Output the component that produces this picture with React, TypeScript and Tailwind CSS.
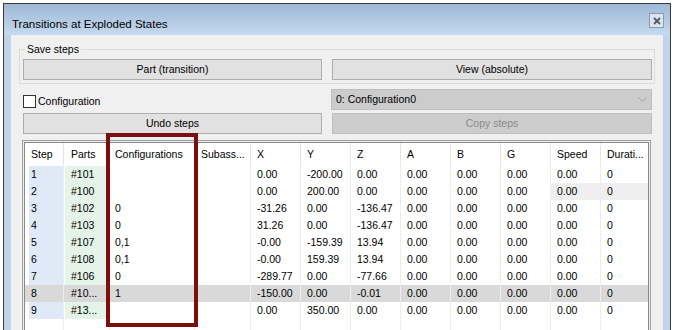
import React from 'react';

type Col = { label: string; w: number; pl: number; border: boolean };

const cols: Col[] = [
  { label: 'Step', w: 38, pl: 6, border: false },
  { label: 'Parts', w: 46, pl: 7, border: true },
  { label: 'Configurations', w: 85, pl: 5, border: true },
  { label: 'Subass...', w: 56, pl: 6, border: true },
  { label: 'X', w: 50, pl: 6, border: true },
  { label: 'Y', w: 50, pl: 6, border: true },
  { label: 'Z', w: 50, pl: 6, border: true },
  { label: 'A', w: 50, pl: 6, border: true },
  { label: 'B', w: 50, pl: 6, border: true },
  { label: 'G', w: 50, pl: 6, border: true },
  { label: 'Speed', w: 50, pl: 6, border: true },
  { label: 'Durati...', w: 48, pl: 6, border: true },
];

const rows: string[][] = [
  ['1', '#101', '', '', '0.00', '-200.00', '0.00'],
  ['2', '#100', '', '', '0.00', '200.00', '0.00'],
  ['3', '#102', '0', '', '-31.26', '0.00', '-136.47'],
  ['4', '#103', '0', '', '31.26', '0.00', '-136.47'],
  ['5', '#107', '0,1', '', '-0.00', '-159.39', '13.94'],
  ['6', '#108', '0,1', '', '-0.00', '159.39', '13.94'],
  ['7', '#106', '0', '', '-289.77', '0.00', '-77.66'],
  ['8', '#10...', '1', '', '-150.00', '0.00', '-0.01'],
  ['9', '#13...', '', '', '0.00', '350.00', '0.00'],
].map((r) => [...r, '0.00', '0.00', '0.00', '0.00', '0']);

function Button({ label, w, disabled }: { label: string; w: number; disabled?: boolean }) {
  return (
    <div
      style={{ width: w }}
      className={
        disabled
          ? 'flex h-[21px] items-center justify-center border border-[#bfbfbf] bg-[#cccccc] text-[#8a8a8a]'
          : 'flex h-[21px] items-center justify-center border border-[#adadad] bg-[#e1e1e1]'
      }
    >
      {label}
    </div>
  );
}

function Row({ cells, idx }: { cells: string[]; idx: number }) {
  const selected = idx === 7;
  return (
    <div className={`flex h-[17px] leading-[17px] ${selected ? 'bg-[#d9d9d9]' : ''}`}>
      {cols.map((c, i) => {
        const grid = c.border ? 'border-l border-[#e9eef5]' : '';
        if (i === 0) {
          return (
            <div key={i} style={{ width: c.w }} className="flex pl-[4px]">
              <div className={`flex-1 pl-[2px] ${selected ? '' : 'bg-[#dfe9f8]'}`}>{cells[i]}</div>
            </div>
          );
        }
        if (i === 1) {
          return (
            <div key={i} style={{ width: c.w }} className={`flex pl-[1px] ${grid}`}>
              <div className={`w-[41px] pl-[6px] ${selected ? '' : 'bg-[#e5f4e9]'}`}>{cells[i]}</div>
            </div>
          );
        }
        const soft = idx === 1 && i >= 10 ? 'bg-[#efefef]' : '';
        return (
          <div key={i} style={{ width: c.w, paddingLeft: c.pl }} className={`${grid} ${soft} whitespace-nowrap`}>
            {cells[i]}
          </div>
        );
      })}
    </div>
  );
}

export default function App() {
  return (
    <div className="relative h-[330px] w-[675px] overflow-hidden bg-white pl-[3px] pt-[3px] font-['Liberation_Sans',Arial,sans-serif] text-[10.5px] text-black">
      <div className="h-[340px] w-[668px] border-x border-t border-[#3a3a3a] bg-[#bdd4ec]">
        {/* caption */}
        <div className="flex h-[31px] items-start justify-between bg-linear-to-b from-[#9fb8d5] to-[#c6daef] pl-[8px] pr-[6px]">
          <span className="mt-[13px] text-[11.5px] leading-[14px]">Transitions at Exploded States</span>
          <div className="mt-[9px] flex h-[15px] w-[15px] items-center justify-center border border-[#8c9cb0] bg-[#dbe5f0]">
            <svg width="8" height="8" viewBox="0 0 8 8">
              <path d="M1 1 L7 7 M7 1 L1 7" stroke="#4f5a66" strokeWidth="1.8" />
            </svg>
          </div>
        </div>

        {/* client */}
        <div className="mx-[7px] h-[310px] bg-[#f0f0f0] px-[8px] pt-[7px]">
          <fieldset className="border border-[#dcdcdc] pb-[3px] pl-[3px]">
            <legend className="ml-[2px] px-[2px] leading-[14px]">Save steps</legend>
            <div className="flex gap-[10px] pt-[3px]">
              <Button label="Part (transition)" w={299} />
              <Button label="View (absolute)" w={320} />
            </div>
          </fieldset>

          <div className="mt-[5px] flex h-[21px]">
            <div className="flex w-[312px] items-start pl-[4px]">
              <div className="mt-[6px] h-[13px] w-[13px] border border-[#333333] bg-white" />
              <span className="ml-[2px] mt-[5px] leading-[14px]">Configuration</span>
            </div>
            <div className="flex w-[321px] items-center justify-between border border-[#bfbfbf] bg-[#cccccc] pl-[4px] pr-[4px]">
              <span>0: Configuration0</span>
              <svg width="9" height="6" viewBox="0 0 9 6">
                <path d="M0.5 0.5 L4.5 4.5 L8.5 0.5" fill="none" stroke="#a8a8a8" strokeWidth="1" />
              </svg>
            </div>
          </div>

          <div className="mt-[3px] flex gap-[10px] pl-[4px]">
            <Button label="Undo steps" w={299} />
            <Button label="Copy steps" w={320} disabled />
          </div>

          {/* grid */}
          <div className="ml-[3px] mt-[6px] w-[629px] border border-[#a0a0a0] bg-[#ececec] p-px">
            <div className="h-[220px] border border-[#8a8a8a] bg-white">
              <div className="flex h-[23px] items-center">
                {cols.map((c, i) => (
                  <div
                    key={i}
                    style={{ width: c.w, paddingLeft: c.pl }}
                    className={`flex h-full items-center whitespace-nowrap ${c.border ? 'border-l border-[#e5e5e5]' : ''}`}
                  >
                    {c.label}
                  </div>
                ))}
              </div>
              {rows.map((r, i) => (
                <Row key={i} cells={r} idx={i} />
              ))}
              <div className="flex h-[40px]">
                {cols.map((c, i) => (
                  <div key={i} style={{ width: c.w }} className={c.border ? 'border-l border-[#e9eef5]' : ''} />
                ))}
              </div>
            </div>
          </div>
        </div>
      </div>

      {/* highlight annotation */}
      <div className="absolute left-[106px] top-[133px] h-[194px] w-[92px] border-[4px] border-[#7d0e0e]" />
    </div>
  );
}
